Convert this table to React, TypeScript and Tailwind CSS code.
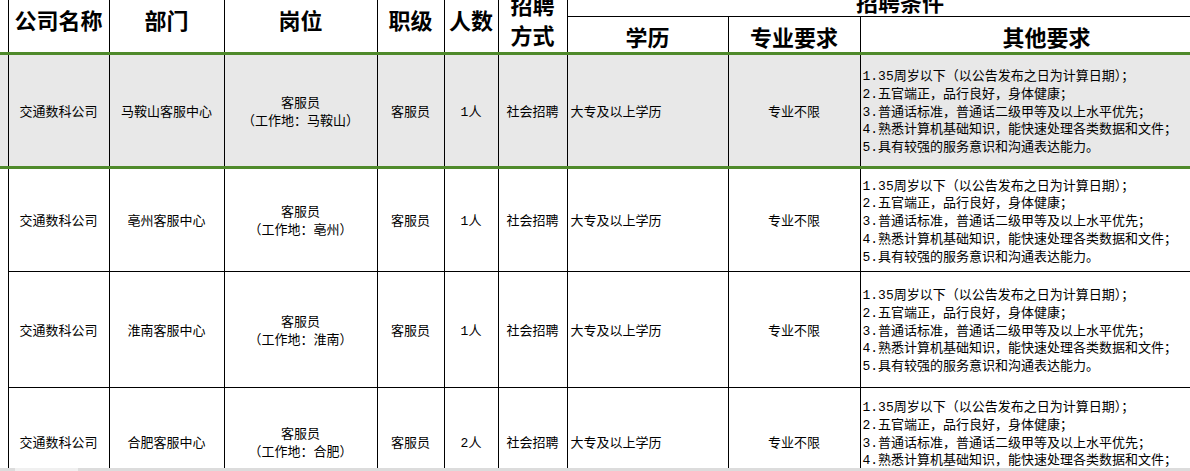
const rows = [
  { dept: '马鞍山客服中心', place: '马鞍山', num: '1人', h: 'h-[114px]', shaded: true },
  { dept: '亳州客服中心', place: '亳州', num: '1人', h: 'h-[104px]', shaded: false },
  { dept: '淮南客服中心', place: '淮南', num: '1人', h: 'h-[116px]', shaded: false },
  { dept: '合肥客服中心', place: '合肥', num: '2人', h: 'h-[108px]', shaded: false },
];

const others = [
  '1.35周岁以下（以公告发布之日为计算日期）；',
  '2.五官端正，品行良好，身体健康；',
  '3.普通话标准，普通话二级甲等及以上水平优先；',
  '4.熟悉计算机基础知识，能快速处理各类数据和文件；',
  '5.具有较强的服务意识和沟通表达能力。',
];

export default function App() {
  const th = 'border border-black font-bold text-[22px] leading-[30px] text-black text-center align-middle p-0';
  const green = 'border-b-[3px] border-b-[#4f8a2b]';

  return (
    <div
      className="relative w-[1190px] h-[471px] overflow-hidden bg-white text-black"
      style={{ fontFamily: '"Noto Sans CJK SC", "Noto Sans", sans-serif' }}
    >
      <table className="table-fixed border-collapse w-[1233px] -mt-[15px]">
        <colgroup>
          <col className="w-[8px]" />
          <col className="w-[101px]" />
          <col className="w-[115px]" />
          <col className="w-[153px]" />
          <col className="w-[67px]" />
          <col className="w-[54px]" />
          <col className="w-[69px]" />
          <col className="w-[161px]" />
          <col className="w-[132px]" />
          <col className="w-[373px]" />
        </colgroup>
        <thead>
          <tr className="h-[31px]">
            <td rowSpan={2} className={`border-r border-black ${green}`} />
            <th rowSpan={2} className={`${th} ${green}`}>公司名称</th>
            <th rowSpan={2} className={`${th} ${green}`}>部门</th>
            <th rowSpan={2} className={`${th} ${green}`}>岗位</th>
            <th rowSpan={2} className={`${th} ${green}`}>职级</th>
            <th rowSpan={2} className={`${th} ${green}`}>人数</th>
            <th rowSpan={2} className={`${th} ${green}`}>招聘<br />方式</th>
            <th colSpan={3} className={th}>招聘条件</th>
          </tr>
          <tr className="h-[37px]">
            <th className={`${th} ${green} pt-[2px]`}>学历</th>
            <th className={`${th} ${green} pt-[2px]`}>专业要求</th>
            <th className={`${th} ${green} pt-[2px]`}>其他要求</th>
          </tr>
        </thead>
        <tbody
          className="text-[13px] leading-[17.7px]"
          style={{ fontFamily: '"Liberation Mono", "Noto Sans CJK SC", monospace' }}
        >
          {rows.map((r, i) => {
            const bg = r.shaded ? 'bg-[#e8e8e8]' : 'bg-white';
            const line = r.shaded ? green : '';
            const td = `border border-black align-middle text-center p-0 pt-[4px] ${bg} ${line}`;
            return (
              <tr key={i} className={r.h}>
                <td className={`border-r border-black ${bg} ${line}`} />
                <td className={td}>交通数科公司</td>
                <td className={td}>{r.dept}</td>
                <td className={td}>
                  客服员
                  <br />
                  （工作地：{r.place}）
                </td>
                <td className={td}>客服员</td>
                <td className={td}>{r.num}</td>
                <td className={td}>社会招聘</td>
                <td className={`${td} !text-left pl-[3px]`}>大专及以上学历</td>
                <td className={td}>专业不限</td>
                <td className={`${td} !text-left pl-[2px]`}>
                  {others.map(o => (
                    <div key={o} className="whitespace-nowrap">{o}</div>
                  ))}
                </td>
              </tr>
            );
          })}
        </tbody>
      </table>

      {/* horizontal scroll strip along the bottom edge */}
      <div className="absolute left-0 right-0 bottom-0 h-[3px] flex">
        <div className="w-[15px] bg-[#dcdcdc]" />
        <div className="w-[63px] bg-[#f0f0f0]" />
        <div className="flex-1 bg-[#dcdcdc]" />
      </div>
    </div>
  );
}
